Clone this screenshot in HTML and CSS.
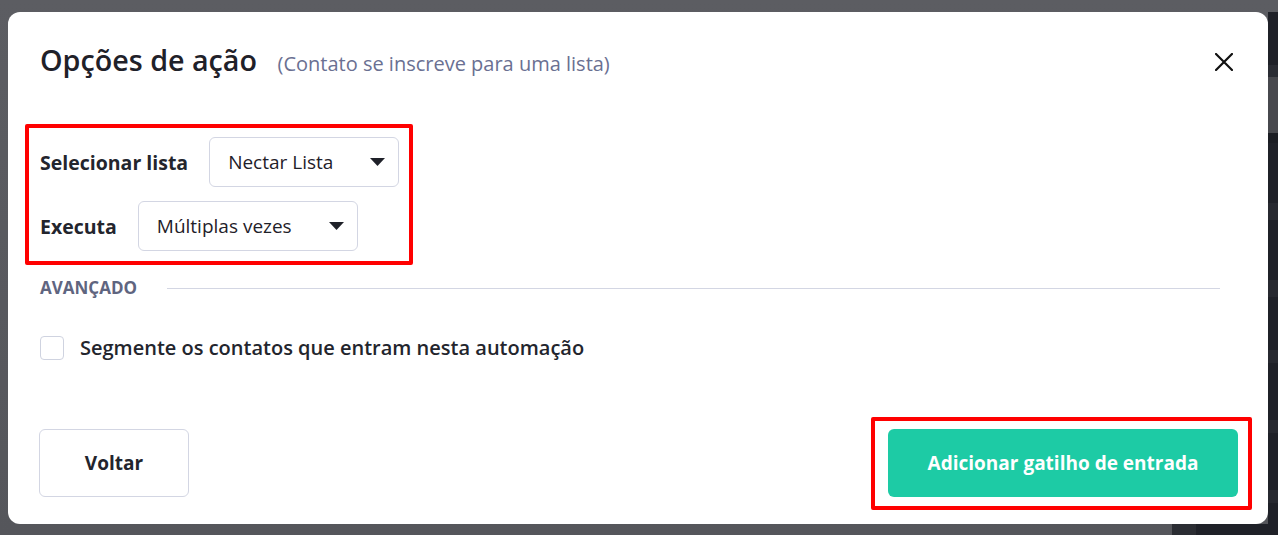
FILE: index.html
```html
<!DOCTYPE html>
<html lang="pt-BR">
<head>
    <meta charset="UTF-8">
    <meta name="viewport" content="width=device-width, initial-scale=1.0">
    <title>Opções de ação</title>
    <link rel="stylesheet" href="styles.css">
</head>
<body>
    <div class="modal">
        <div class="modal-header">
            <h2 class="modal-title">Opções de ação <span class="modal-subtitle">(Contato se inscreve para uma lista)</span></h2>
            <button class="close-btn" type="button" aria-label="Fechar">
                <svg width="18" height="18" viewBox="0 0 18 18">
                    <path d="M1 1L17 17M17 1L1 17" stroke="#111" stroke-width="2.2" stroke-linecap="square" fill="none"/>
                </svg>
            </button>
        </div>

        <div class="modal-body">
            <div class="highlight trigger-fields">
                <div class="field-row">
                    <label class="field-label">Selecionar lista</label>
                    <div class="select">
                        <span>Nectar Lista</span>
                        <svg class="caret" width="15" height="8" viewBox="0 0 15 8"><path d="M0 0H15L7.5 8Z" fill="#1f2129"/></svg>
                    </div>
                </div>
                <div class="field-row">
                    <label class="field-label">Executa</label>
                    <div class="select">
                        <span>Múltiplas vezes</span>
                        <svg class="caret" width="15" height="8" viewBox="0 0 15 8"><path d="M0 0H15L7.5 8Z" fill="#1f2129"/></svg>
                    </div>
                </div>
            </div>

            <div class="section-title">
                <span>Avançado</span>
                <div class="section-line"></div>
            </div>

            <label class="checkbox-row">
                <span class="checkbox"></span>
                Segmente os contatos que entram nesta automação
            </label>
        </div>

        <div class="modal-footer">
            <button class="btn btn-outline" type="button">Voltar</button>
            <div class="highlight submit-wrap">
                <button class="btn btn-primary" type="button">Adicionar gatilho de entrada</button>
            </div>
        </div>
    </div>
</body>
</html>
```

FILE: styles.css
```css
body {
    margin: 0;
    height: 535px;
    overflow: hidden;
    font-family: 'Open Sans', 'Noto Sans', sans-serif;
    color: #23252d;
    /* dimmed app behind the dialog: table rows on the right, grey overlay elsewhere */
    background:
        linear-gradient(#1f2128 0, #1f2128 53px,
                        #2a2c33 53px, #2a2c33 65px,
                        #47484d 65px, #47484d 121px,
                        #1b1d23 121px, #1b1d23 131px,
                        #1f2128 131px, #1f2128 191px,
                        #272930 191px, #272930 208px,
                        #1f2128 208px, #1f2128 268px,
                        #272930 268px, #272930 285px,
                        #1f2128 285px, #1f2128 338px,
                        #272930 338px, #272930 351px,
                        #1f2128 351px, #1f2128 408px,
                        #272930 408px, #272930 421px,
                        #1f2128 421px, #1f2128 478px,
                        #272930 478px, #272930 491px,
                        #1f2128 491px)
            right 0 top 12px / 10px 523px no-repeat,
        linear-gradient(to right, #2b2d33 0, #2b2d33 24px, #1f2128 24px)
            right 0 bottom 0 / 106px 11px no-repeat,
        linear-gradient(#5c5d62, #55565b);
}

.modal {
    box-sizing: border-box;
    margin: 12px 0 0 8px;
    width: 1260px;
    height: 512px;
    background-color: #ffffff;
    border-radius: 12px;
    padding: 30px 30px 0 32px;
    display: flex;
    flex-direction: column;
}

.modal-header {
    display: flex;
    align-items: center;
    justify-content: space-between;
}

.modal-title {
    margin: 0;
    font-size: 28.7px;
    line-height: 36px;
    font-weight: 600;
    color: #1f2129;
}

.modal-subtitle {
    margin-left: 13px;
    font-size: 20px;
    font-weight: 400;
    color: #6a7092;
}

.close-btn {
    background: none;
    border: none;
    padding: 0;
    margin-right: 5px;
    cursor: pointer;
    display: flex;
}

.modal-body {
    padding-top: 42px;
}

.highlight {
    border: 4px solid #ff0000;
    border-radius: 2px;
}

.trigger-fields {
    display: flex;
    flex-direction: column;
    gap: 14px;
    width: max-content;
    padding: 9px 10px 10px 11px;
    margin-left: -15px;
}

.field-row {
    display: flex;
    align-items: center;
    gap: 21px;
}

.field-label {
    font-size: 19.5px;
    font-weight: 700;
    color: #23252d;
}

.select {
    box-sizing: border-box;
    height: 50px;
    display: flex;
    align-items: center;
    gap: 37px;
    padding: 0 13px 0 18px;
    border: 1px solid #d3d6e3;
    border-radius: 6px;
    font-size: 19px;
    color: #1f2129;
}

.section-title {
    display: flex;
    align-items: center;
    gap: 30px;
    margin-top: 13px;
    margin-right: 18px;
    font-size: 17px;
    line-height: 20px;
    font-weight: 700;
    text-transform: uppercase;
    color: #5f6580;
}

.section-line {
    flex: 1;
    height: 1px;
    background-color: #d3d6e3;
}

.checkbox-row {
    display: flex;
    align-items: center;
    gap: 16px;
    margin-top: 36px;
    font-size: 20px;
    font-weight: 600;
    color: #23252d;
}

.checkbox {
    box-sizing: border-box;
    width: 24px;
    height: 24px;
    border: 1px solid #cfd3e0;
    border-radius: 4px;
}

.modal-footer {
    display: flex;
    align-items: center;
    justify-content: space-between;
    margin-top: 68px;
}

.btn {
    box-sizing: border-box;
    height: 68px;
    border-radius: 6px;
    font-family: inherit;
    font-size: 19px;
    font-weight: 700;
    cursor: pointer;
}

.btn-outline {
    width: 150px;
    margin-left: -1px;
    background-color: #ffffff;
    border: 1px solid #d3d6e3;
    color: #23252d;
}

.btn-primary {
    width: 350px;
    background-color: #1dcba5;
    border: none;
    color: #ffffff;
}

.submit-wrap {
    display: flex;
    padding: 8px 10px 9px 13px;
    margin: -12px -14px -13px 0;
}
```
